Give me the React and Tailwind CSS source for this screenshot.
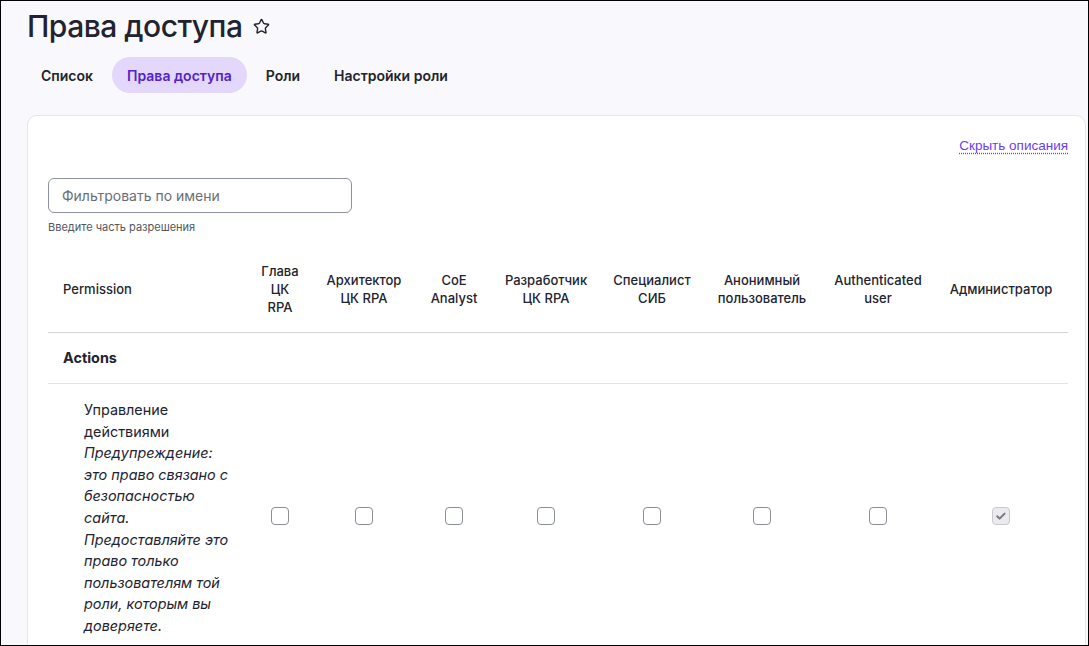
import { Star } from "lucide-react";

const ROLES = [
  { label: ["Глава", "ЦК", "RPA"], width: "w-[60px]" },
  { label: ["Архитектор ЦК RPA"], width: "w-[108px]" },
  { label: ["CoE Analyst"], width: "w-[72px]" },
  { label: ["Разработчик ЦК RPA"], width: "w-[112px]" },
  { label: ["Специалист СИБ"], width: "w-[100px]" },
  { label: ["Анонимный пользователь"], width: "w-[120px]" },
  { label: ["Authenticated user"], width: "w-[112px]" },
  { label: ["Администратор"], width: "w-[134px]" },
];

const TABS = ["Список", "Права доступа", "Роли", "Настройки роли"];

function Checkbox({ checked }) {
  if (checked) {
    return (
      <span className="inline-flex w-[18px] h-[18px] items-center justify-center rounded-[4px] border border-[#c8c9cf] bg-[#ebebef] align-middle">
        <svg width="12" height="12" viewBox="0 0 12 12" fill="none">
          <path d="M2.2 6.2l2.4 2.4 5-5" stroke="#77787f" strokeWidth="2" strokeLinecap="round" strokeLinejoin="round" />
        </svg>
      </span>
    );
  }
  return <span className="inline-block w-[18px] h-[18px] rounded-[4px] border border-[#8a8e98] bg-white align-middle" />;
}

export default function App() {
  return (
    <div className="w-[1089px] h-[646px] overflow-hidden border border-black bg-[#f9f8fc] text-[#222330]" style={{ fontFamily: "Inter, 'Noto Sans', sans-serif" }}>
      <div className="pl-[25px] pt-[7px]">
        <div className="ml-[1px] flex items-center gap-[10px]">
          <h1 className="text-[30px] leading-[36px] font-medium tracking-[-0.5px]">Права доступа</h1>
          <Star className="w-[17px] h-[17px] mt-[1px]" strokeWidth={2} />
        </div>
        <nav className="mt-[13px] flex gap-1">
          {TABS.map((t) => (
            <span
              key={t}
              className={
                t === "Права доступа"
                  ? "h-[36px] px-[15px] flex items-center rounded-full bg-[#e4d7fc] text-[#5523c6] text-[14px] font-semibold"
                  : "h-[36px] px-[15px] flex items-center rounded-full text-[#232429] text-[14px] font-semibold"
              }
            >
              {t}
            </span>
          ))}
        </nav>
      </div>

      <div className="ml-[26px] mr-[2px] mt-[22px] rounded-t-[10px] border border-[#e6e4ec] bg-white pl-[20px] pr-[17px] pt-[21px] h-[600px]">
        <div className="flex justify-end">
          <a className="text-[13.5px] leading-[17px] text-[#6c3cf4] underline decoration-dotted underline-offset-[3px]" style={{ fontFamily: "'Liberation Sans', Arial, sans-serif" }}>
            Скрыть описания
          </a>
        </div>

        <div className="mt-[24px] w-[304px] h-[35px] rounded-[6px] border border-[#8e929c] flex items-center pl-[13px] text-[14px] text-[#6b6e78]">
          Фильтровать по имени
        </div>
        <div className="mt-[7px] text-[11px] leading-[14px] text-[#55565b]">Введите часть разрешения</div>

        <table className="mt-[12px] w-[1020px] table-fixed border-collapse">
          <thead>
            <tr className="border-b border-[#d4d4d8]">
              <th className="w-[202px] pl-[15px] py-4 text-left text-[13px] leading-[18px] font-medium">Permission</th>
              {ROLES.map((r, i) => (
                <th key={i} className={`${r.width} px-2 py-4 text-center text-[13px] leading-[18px] font-medium`}>
                  {r.label.map((l, j) => (
                    <div key={j}>{l}</div>
                  ))}
                </th>
              ))}
            </tr>
          </thead>
          <tbody>
            <tr className="border-b border-[#e3e3e6]">
              <td colSpan={9} className="pl-[15px] py-4 text-[14.4px] leading-[18px] font-bold">Actions</td>
            </tr>
            <tr>
              <td className="pl-[15px] pt-[15px] pb-[9px] align-top">
                <div className="ml-[21px] w-[152px] text-[14.4px] leading-[21.6px]">
                  <div>Управление действиями</div>
                  <div className="italic">
                    Предупреждение: это право связано с безопасностью сайта. Предоставляйте это право только пользователям той роли, которым вы доверяете.
                  </div>
                </div>
              </td>
              {ROLES.map((r, i) => (
                <td key={i} className="text-center align-middle">
                  <Checkbox checked={i === ROLES.length - 1} />
                </td>
              ))}
            </tr>
          </tbody>
        </table>
      </div>
    </div>
  );
}
